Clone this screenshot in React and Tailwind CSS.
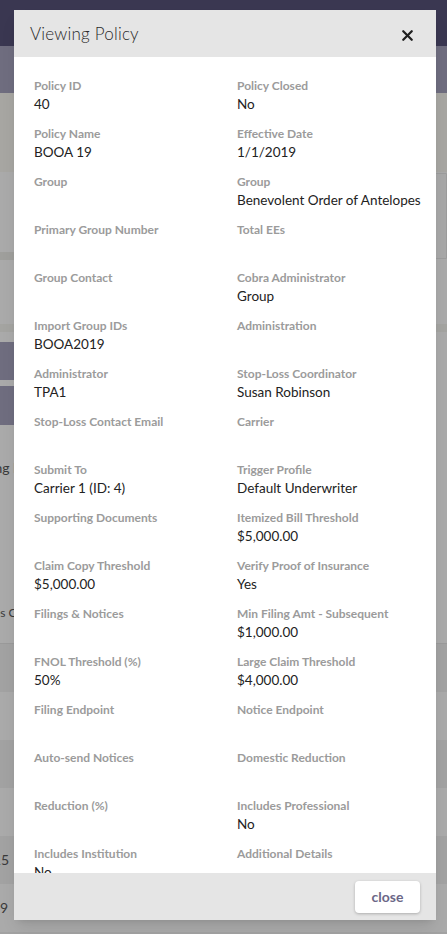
import { X } from 'lucide-react';

const fields = [
  ['Policy ID', '40'],
  ['Policy Closed', 'No'],
  ['Policy Name', 'BOOA 19'],
  ['Effective Date', '1/1/2019'],
  ['Group', ''],
  ['Group', 'Benevolent Order of Antelopes'],
  ['Primary Group Number', ''],
  ['Total EEs', ''],
  ['Group Contact', ''],
  ['Cobra Administrator', 'Group'],
  ['Import Group IDs', 'BOOA2019'],
  ['Administration', ''],
  ['Administrator', 'TPA1'],
  ['Stop-Loss Coordinator', 'Susan Robinson'],
  ['Stop-Loss Contact Email', ''],
  ['Carrier', ''],
  ['Submit To', 'Carrier 1 (ID: 4)'],
  ['Trigger Profile', 'Default Underwriter'],
  ['Supporting Documents', ''],
  ['Itemized Bill Threshold', '$5,000.00'],
  ['Claim Copy Threshold', '$5,000.00'],
  ['Verify Proof of Insurance', 'Yes'],
  ['Filings & Notices', ''],
  ['Min Filing Amt - Subsequent', '$1,000.00'],
  ['FNOL Threshold (%)', '50%'],
  ['Large Claim Threshold', '$4,000.00'],
  ['Filing Endpoint', ''],
  ['Notice Endpoint', ''],
  ['Auto-send Notices', ''],
  ['Domestic Reduction', ''],
  ['Reduction (%)', ''],
  ['Includes Professional', 'No'],
  ['Includes Institution', 'No'],
  ['Additional Details', ''],
];

const font = { fontFamily: 'Lato, "Noto Sans", sans-serif' };

// dimmed page behind the dialog
function Backdrop() {
  return (
    <div className="w-[447px] h-[934px] overflow-hidden bg-[#aaaaaa] text-[#3a3a3a] text-sm" style={font}>
      <div className="h-[46px] bg-[#3a3751]" />
      <div className="h-[47px] bg-[#6f6d7f]" />
      <div className="h-[79px] bg-[#a7a6a2]" />
      <div className="flex h-[88px]">
        <div className="flex-1 flex flex-col">
          <div className="h-[80px]" />
          <div className="h-[8px] bg-[#9f9f9c]" />
        </div>
        <div className="w-[20px] mt-[1px] mb-[1px] rounded-l-lg bg-[#a8a8a8] border border-[#9c9c9c]" />
      </div>
      <div className="h-[64px]" />
      <div className="h-[8px] bg-[#a4a4a1]" />
      <div className="h-[10px]" />
      <div className="h-[38px] w-[120px] rounded-r bg-[#6f6d7f]" />
      <div className="h-[6px]" />
      <div className="h-[39px] w-[120px] rounded-r bg-[#6f6d7f]" />
      <div className="h-[218px] relative">
        <div className="absolute left-[-40px] top-[33px] leading-5">Pending Fi</div>
        <div className="absolute left-[-26px] top-[178px] leading-5 text-xs">Notes Co</div>
      </div>
      <div className="border-t border-[#9a9a9a]" />
      <div className="h-[48px] bg-[#a2a2a2]" />
      <div className="h-[48px]" />
      <div className="h-[48px] bg-[#a2a2a2]" />
      <div className="h-[48px]" />
      <div className="h-[48px] bg-[#a2a2a2] flex items-center pl-[1px]">
        <span className="ml-[-8px]">15</span>
      </div>
      <div className="h-[48px] flex items-center">
        <span className="ml-[-8px]">19</span>
      </div>
      <div className="h-[4px] bg-[#a2a2a2]" />
    </div>
  );
}

function Field({ label, value }) {
  return (
    <div className="pb-3">
      <div className="text-xs font-bold leading-[18px] text-[#9b9b9b] whitespace-nowrap">{label}</div>
      <div className="text-[13.5px] leading-[18px] min-h-[18px] text-[#222222] whitespace-nowrap">
        {value}
      </div>
    </div>
  );
}

export default function App() {
  return (
    <div className="relative w-[447px] h-[934px] overflow-hidden">
      <Backdrop />
      <div
        className="absolute left-[14px] top-[10px] w-[422px] h-[910px] flex flex-col bg-white shadow-lg"
        style={font}
      >
        <div className="h-[47px] shrink-0 flex items-center justify-between pl-4 pr-5 bg-[#e5e5e5]">
          <h2 className="text-[17px] font-light text-[#2a2a2a] tracking-[0.2px]">Viewing Policy</h2>
          <X size={17} strokeWidth={3.2} className="text-[#1f1f1f] mt-[3px]" />
        </div>
        <div className="flex-1 overflow-hidden px-5 pt-5">
          <div className="grid grid-cols-2 gap-x-6">
            {fields.map(([label, value], i) => (
              <Field key={i} label={label} value={value} />
            ))}
          </div>
        </div>
        <div className="h-[47px] shrink-0 flex items-center justify-end pr-4 bg-[#e5e5e5]">
          <button className="h-[32px] w-[65px] rounded bg-white shadow-[0_1px_3px_rgba(0,0,0,0.25)] text-sm font-bold text-[#6b6787]">
            close
          </button>
        </div>
      </div>
    </div>
  );
}
